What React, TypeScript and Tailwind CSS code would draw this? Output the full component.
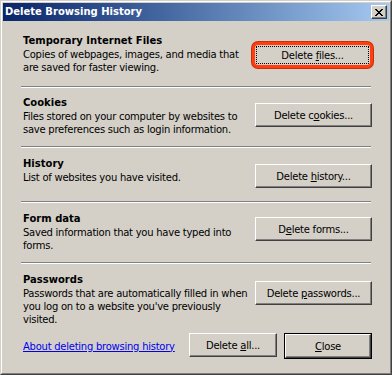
import React from 'react';

const font = "font-['DejaVu_Sans',sans-serif]";

const Btn = ({ children, className = '' }: { children: React.ReactNode; className?: string }) => (
  <div
    className={`flex items-center justify-center h-[24px] bg-[#d4d0c8] border border-t-white border-l-white border-r-[#404040] border-b-[#404040] shadow-[inset_-1px_-1px_0_#808080] text-black ${className}`}
  >
    <span className="whitespace-pre">{children}</span>
  </div>
);

const Sep = ({ className = '' }: { className?: string }) => (
  <div className={`h-[2px] mr-[1px] border-t border-t-[#808080] border-b border-b-white ${className}`} />
);

interface Section {
  title: string;
  lines: string[];
  label: React.ReactNode;
  rowMt: string;
  btnMt: string;
}

const sections: Section[] = [
  {
    title: 'Cookies',
    lines: ['Files stored on your computer by websites to', 'save preferences such as login information.'],
    label: <>Delete c<u>o</u>okies...</>,
    rowMt: 'mt-[8px]',
    btnMt: 'mt-[7px]',
  },
  {
    title: 'History',
    lines: ['List of websites you have visited.'],
    label: <>Delete <u>h</u>istory...</>,
    rowMt: 'mt-[9px]',
    btnMt: 'mt-[7px]',
  },
  {
    title: 'Form data',
    lines: ['Saved information that you have typed into', 'forms.'],
    label: <>D<u>e</u>lete forms...</>,
    rowMt: 'mt-[9px]',
    btnMt: 'mt-[5px]',
  },
];

const sepMt = ['mt-[10px]', 'mt-[13px]', 'mt-[10px]'];

const Text = ({ title, lines }: { title: string; lines: string[] }) => (
  <div className="pl-[2px] whitespace-nowrap">
    <div className="font-bold leading-[14px] tracking-normal">{title}</div>
    {lines.map((l) => (
      <div key={l} className="leading-[13px]">{l}</div>
    ))}
  </div>
);

export default function App() {
  return (
    <div className={`w-[392px] h-[375px] border border-t-[#d4d0c8] border-l-[#d4d0c8] border-r-[#404040] border-b-[#404040] bg-[#d4d0c8] ${font} text-[10px] tracking-[-0.25px] text-black`}>
      <div className="h-full border border-t-white border-l-white border-r-[#808080] border-b-[#808080] p-[1px] flex flex-col">
        {/* title bar */}
        <div className="h-[18px] flex items-center justify-between bg-linear-to-r from-[#0a246a] to-[#a6caf0] pl-[2px] pr-[2px]">
          <span className="text-white font-bold text-[10px] tracking-normal leading-[18px]">Delete Browsing History</span>
          <div className="w-[16px] h-[14px] bg-[#d4d0c8] border border-t-white border-l-white border-r-[#404040] border-b-[#404040] shadow-[inset_-1px_-1px_0_#808080] flex items-center justify-center">
            <svg width="8" height="7" viewBox="0 0 8 7">
              <path d="M0 0h2v1h1v1h2v-1h1v-1h2v1h-1v1h-1v1h-1v1h1v1h1v1h1v1h-2v-1h-1v-1h-2v1h-1v1h-2v-1h1v-1h1v-1h1v-1h-1v-1h-1v-1h-1z" fill="black" />
            </svg>
          </div>
        </div>

        <div className="pl-[18px] pr-[17px] flex flex-col">
          {/* temporary internet files */}
          <div className="mt-[13px] flex justify-between items-start">
            <Text
              title="Temporary Internet Files"
              lines={['Copies of webpages, images, and media that', 'are saved for faster viewing.']}
            />
            <div className="mt-[8px] mr-[-1px] w-[121px] h-[26px] rounded-[6px] border-[3px] border-[#ff3d0f] shadow-[0_0_0_1px_#c8300c] bg-[#d4d0c8] p-[1px]">
              <div className="h-full border border-dotted border-black flex items-center justify-center">
                <span className="whitespace-pre">Delete <u>f</u>iles...</span>
              </div>
            </div>
          </div>
          <Sep className="mt-[12px]" />

          {sections.map((s, i) => (
            <React.Fragment key={s.title}>
              <div className={`${s.rowMt} flex justify-between items-start`}>
                <Text title={s.title} lines={s.lines} />
                <Btn className={`${s.btnMt} w-[117px]`}>{s.label}</Btn>
              </div>
              <Sep className={sepMt[i]} />
            </React.Fragment>
          ))}

          {/* passwords */}
          <div className="mt-[9px] flex justify-between items-start">
            <Text
              title="Passwords"
              lines={['Passwords that are automatically filled in when', "you log on to a website you've previously", 'visited.']}
            />
            <Btn className="mt-[8px] w-[117px]">
              Delete <u>p</u>asswords...
            </Btn>
          </div>

          <div className="mt-[7px] flex items-center">
            <a href="#" className="pl-[2px] text-[#0000ee] underline leading-[13px] whitespace-nowrap">
              About deleting browsing history
            </a>
            <div className="ml-auto flex gap-[7px]">
              <Btn className="w-[88px]">
                Delete <u>a</u>ll...
              </Btn>
              <div className="border border-black">
                <Btn className="w-[86px] h-[22px]">
                  <u>C</u>lose
                </Btn>
              </div>
            </div>
          </div>
        </div>
      </div>
    </div>
  );
}
